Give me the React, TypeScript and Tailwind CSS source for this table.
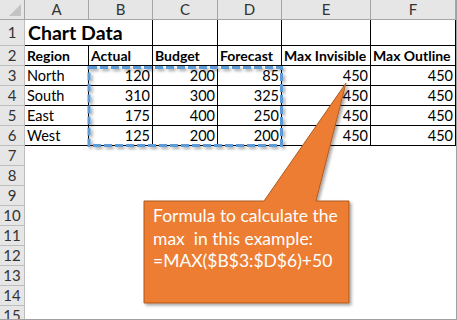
import React from "react";

const font = { fontFamily: "Lato, 'Open Sans', sans-serif" };

const letters = ["A", "B", "C", "D", "E", "F"];

const body: (string | number)[][] = [
  ["North", 120, 200, 85, 450, 450],
  ["South", 310, 300, 325, 450, 450],
  ["East", 175, 400, 250, 450, 450],
  ["West", 125, 200, 200, 450, 450],
];

const heads = ["Region", "Actual", "Budget", "Forecast", "Max Invisible", "Max Outline"];

function RowNum({ n, tall }: { n: number; tall?: boolean }) {
  return (
    <div
      className={`flex items-center justify-center bg-[#e6e6e6] border-r border-b border-[#bdbdbd] text-[15px] text-[#333] ${
        tall ? "h-[26px]" : "h-[20px]"
      }`}
    >
      {n}
    </div>
  );
}

export default function App() {
  return (
    <div
      className="relative w-[457px] h-[320px] overflow-hidden bg-white border-r border-b border-[#a0a0a0]"
      style={font}
    >
      <div className="grid grid-cols-[25px_64px_64px_65px_64px_89px_85px]">
        {/* column headers */}
        <div className="relative h-[20px] bg-[#e6e6e6] border-r border-b border-[#a6a6a6]">
          <div className="absolute right-[3px] bottom-[3px] w-0 h-0 border-l-[12px] border-l-transparent border-b-[12px] border-b-[#c3c3c3]" />
        </div>
        {letters.map((l) => (
          <div
            key={l}
            className="flex items-center justify-center h-[20px] bg-[#e6e6e6] border-r border-b border-[#a6a6a6] text-[15px] text-[#333]"
          >
            {l}
          </div>
        ))}

        {/* row 1 */}
        <RowNum n={1} tall />
        <div className="col-span-2 h-[26px] flex items-center pl-[3px] border-r border-b border-black font-bold text-[19.5px] text-black">
          Chart Data
        </div>
        {[0, 1, 2, 3].map((i) => (
          <div key={i} className="h-[26px] border-r border-b border-black" />
        ))}

        {/* row 2 */}
        <RowNum n={2} />
        {heads.map((h) => (
          <div
            key={h}
            className="h-[20px] flex items-center pl-[2px] border-r border-b border-black font-bold text-[14px] text-black whitespace-nowrap overflow-hidden"
          >
            {h}
          </div>
        ))}

        {/* rows 3-6 */}
        {body.map((r, i) => (
          <React.Fragment key={i}>
            <RowNum n={i + 3} />
            {r.map((v, j) => (
              <div
                key={j}
                className={`h-[20px] flex items-center border-r border-b border-black text-[14.5px] text-black ${
                  j === 0 ? "pl-[2px]" : "justify-end pr-[2px]"
                }`}
              >
                {v}
              </div>
            ))}
          </React.Fragment>
        ))}

        {/* empty rows */}
        {[7, 8, 9, 10, 11, 12, 13, 14, 15].map((n) => (
          <React.Fragment key={n}>
            <RowNum n={n} />
            <div className="col-span-6 h-[20px]" />
          </React.Fragment>
        ))}
      </div>

      {/* selection marquee + callout */}
      <svg className="absolute left-0 top-0 pointer-events-none" width="457" height="320">
        <defs>
          <filter id="sh" x="-10%" y="-10%" width="130%" height="130%">
            <feDropShadow dx="2" dy="2" stdDeviation="1.5" floodColor="#000" floodOpacity="0.35" />
          </filter>
        </defs>
        <rect
          x="89"
          y="67.5"
          width="192.5"
          height="78"
          fill="none"
          stroke="#5b9bd5"
          strokeWidth="3"
          strokeDasharray="8 3"
          filter="url(#sh)"
        />
        <path
          d="M144 201 L264 201 L346 83 L316 201 L349 201 L349 303 L144 303 Z"
          fill="#ed7d31"
          stroke="#ae5a21"
          strokeWidth="1"
          filter="url(#sh)"
        />
      </svg>
      <div className="absolute left-[153px] top-[205px] text-white text-[17.5px] leading-[22.5px] whitespace-pre">
        {"Formula to calculate the\nmax  in this example:\n=MAX($B$3:$D$6)+50"}
      </div>
    </div>
  );
}
